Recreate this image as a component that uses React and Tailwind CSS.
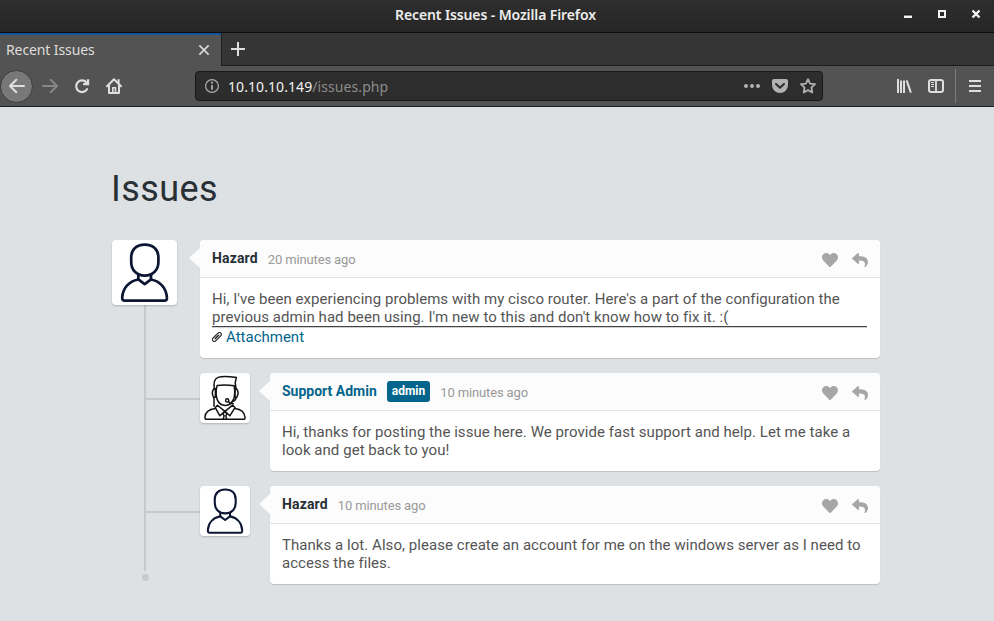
import React from "react";
import { FaHeart, FaReply } from "react-icons/fa";

const CHROME_FONT = "font-['Noto_Sans','Open_Sans',sans-serif]";

function TitleBar() {
  return (
    <div className="relative flex h-[33px] items-start border-b border-[#0b0b0b] bg-gradient-to-b from-[#2e2e2e] to-[#262626]">
      <div className="w-full pl-[395px] pt-[5px] text-[14px] leading-5 font-semibold tracking-[-0.11px] whitespace-nowrap text-[#eeeeec]">
        Recent Issues - Mozilla Firefox
      </div>
      <svg className="mt-2 mr-[13px] h-3 w-[78px] shrink-0" viewBox="0 0 78 12" fill="none">
        <path d="M1 8.5h8" stroke="#f4f4f4" strokeWidth="3" />
        <path d="M1 7h8" stroke="#111" strokeWidth="1" />
        <rect x="36" y="3" width="6" height="6" stroke="#f4f4f4" strokeWidth="2" />
        <path d="M69.5 2.5l7 7M76.5 2.5l-7 7" stroke="#f4f4f4" strokeWidth="2.4" />
      </svg>
    </div>
  );
}

function TabStrip() {
  return (
    <div className="flex h-[33px] bg-[#353535]">
      <div className="flex w-[221px] shrink-0 items-center justify-between border-t-2 border-[#15539e] bg-[#535353] pb-px pr-[11px] pl-[6px]">
        <span className="text-[14px] leading-5 tracking-[-0.1px] whitespace-nowrap text-[#dededc]">Recent Issues</span>
        <svg className="size-3" viewBox="0 0 12 12" fill="none" stroke="#dadada" strokeWidth="1.6">
          <path d="M1.4 1.4l9.2 9.2M10.6 1.4l-9.2 9.2" />
        </svg>
      </div>
      <div className="flex flex-1 items-start border-b border-l border-[#1d1d1d] pt-[9px] pl-[9px]">
        <svg className="size-[14px]" viewBox="0 0 14 14" stroke="#dedede" strokeWidth="2">
          <path d="M7 0v14M0 7h14" />
        </svg>
      </div>
    </div>
  );
}

function Toolbar() {
  return (
    <div className="flex h-[41px] items-center border-b border-[#202020] bg-[#535353] text-[#dedede]">
      <div className="flex size-[33px] shrink-0 items-center justify-center rounded-full border border-[#3c3c3c] bg-[#787878]">
        <svg className="size-4" viewBox="0 0 16 16" fill="none" stroke="currentColor" strokeWidth="2" strokeLinecap="round" strokeLinejoin="round">
          <path d="M15 8H1M7.3 1.7L1 8l6.3 6.3" />
        </svg>
      </div>
      <svg className="ml-[9px] size-4 text-[#878787]" viewBox="0 0 16 16" fill="none" stroke="currentColor" strokeWidth="2" strokeLinecap="round" strokeLinejoin="round">
        <path d="M1 8h14M8.7 1.7L15 8l-6.3 6.3" />
      </svg>
      <svg className="ml-4 size-4" viewBox="0 0 16 16" fill="none" stroke="currentColor" strokeWidth="2.2">
        <path d="M13 11.2A5.8 5.8 0 1 1 12.4 4.4" strokeLinecap="round" />
        <path d="M15.2 1.2V7.2H9.2V5h3.6V1.2z" fill="currentColor" stroke="none" />
      </svg>
      <svg className="ml-4 size-4" viewBox="0 0 16 16" fill="none" stroke="currentColor" strokeWidth="2" strokeLinejoin="round" strokeLinecap="round">
        <path d="M1 8.2L8 1.2l7 7" />
        <path d="M3 7.5V15h10V7.5" />
        <path d="M6.8 14.5V9.8h2.7v4.7" strokeWidth="1.6" />
        <path d="M12.6 2v3" />
      </svg>
      <div className="ml-[73px] flex h-[30px] w-[628px] shrink-0 items-center rounded border border-[#181818] bg-[#2d2d2d] pr-[6px] pl-[8px]">
        <svg className="size-4" viewBox="0 0 16 16" fill="none">
          <circle cx="8" cy="8" r="6.4" stroke="#adadad" strokeWidth="1.2" />
          <path d="M8 7v4.8" stroke="#adadad" strokeWidth="1.8" />
          <circle cx="8" cy="4.7" r="1.1" fill="#adadad" />
        </svg>
        <div className="ml-2 flex-1 pt-0.5 text-[14px] leading-5 tracking-[0.08px] whitespace-nowrap text-[#8c8c8a]">
          <span className="text-[#f2f2f0]">10.10.10.149</span>/issues.php
        </div>
        <svg className="h-4 w-4" viewBox="0 0 16 16" fill="#b1b1b1">
          <circle cx="2" cy="8" r="2" />
          <circle cx="8" cy="8" r="2" />
          <circle cx="14" cy="8" r="2" />
        </svg>
        <svg className="ml-3 size-4" viewBox="0 0 16 16">
          <path d="M2 1h12a2 2 0 0 1 2 2v4a8 8 0 0 1-16 0V3a2 2 0 0 1 2-2z" fill="#b1b1b1" />
          <path d="M4 6l4 3.8L12 6" fill="none" stroke="#2d2d2d" strokeWidth="2" strokeLinecap="round" strokeLinejoin="round" />
        </svg>
        <svg className="ml-3 size-4" viewBox="0 0 16 16" fill="none" stroke="#b1b1b1" strokeWidth="1.8" strokeLinejoin="round">
          <path d="M8 1.2l2.1 4.4 4.9.6-3.6 3.4.9 4.9L8 12.1l-4.3 2.4.9-4.9L1 6.2l4.9-.6z" />
        </svg>
      </div>
      <svg className="ml-[73px] size-4" viewBox="0 0 16 16" stroke="currentColor" strokeWidth="2">
        <path d="M2 1v14M5 2.5V15M8 2.5V15" />
        <path d="M10.6 2.4l4.3 12.2" />
      </svg>
      <svg className="ml-4 size-4" viewBox="0 0 16 16" fill="none" stroke="currentColor">
        <rect x="1" y="2" width="14" height="12" rx="2.2" strokeWidth="2" />
        <path d="M8 2v12" strokeWidth="1.8" />
        <path d="M3 4.5h3M3 6.5h3M3 8.5h3" strokeWidth="1" />
      </svg>
      <div className="ml-[11px] h-[34px] w-px bg-[#7c7c7c]" />
      <svg className="ml-[13px] h-3 w-3" viewBox="0 0 12 12" stroke="currentColor" strokeWidth="2">
        <path d="M0 1h12M0 6h12M0 11h12" />
      </svg>
    </div>
  );
}

function PersonIcon({ className }) {
  return (
    <svg className={className} viewBox="0 0 65 65" fill="none" stroke="#0c1633" strokeWidth="2.7" strokeLinejoin="round">
      <path d="M19.2 17.5C19.2 9.3 24.7 4.6 32.8 4.6S46.4 9.3 46.4 17.5v4.6C46.4 30 41 35.6 32.8 35.6S19.2 30 19.2 22z" />
      <path d="M26.3 34.5v5.2M39 34.5v5.2" />
      <path d="M26 39.2l6.7 5 6.7-5" />
      <path d="M26.3 39.5C17 41.3 10.7 48 10.2 57.4c-.1 2.3.6 3.3 2.6 3.3h39.6c2 0 2.7-1 2.5-3.3-.6-9.4-6.7-16.1-15.9-17.9" />
    </svg>
  );
}

function AgentIcon({ className }) {
  return (
    <svg className={className} viewBox="0 0 50 50" fill="none" stroke="#111" strokeWidth="1.5" strokeLinejoin="round" strokeLinecap="round">
      <path d="M14.6 16C13 9 14.2 6 18 4.4c5.7-1.7 12-.7 18.3.1l-1.1 5.4.8 5.8" />
      <path d="M16.2 16.6l1-4.2c5.6-.7 11.3-.6 17 .4.7 4.4.9 9.6-.7 13.6-1.6 3.8-4.9 6-8.2 6-3.5 0-6.7-2.3-8.2-6-1-2.6-1.2-6-.9-9.8z" />
      <path d="M15.4 15.8h-1.7c-1.6 2.4-1.6 6 0 8.5h1.7zM35 15.8h1.7c1.6 2.4 1.6 6 0 8.5H35z" strokeWidth="1.5" />
      <path d="M14 24.8v8.4" />
      <path d="M36.3 24.5c-.7 2.7-2.2 3.7-4 3.8" />
      <circle cx="27.2" cy="27.4" r="1.6" strokeWidth="1.5" />
      <path d="M28.6 28.6c1 1.8 2.9 2.3 4.6 2.2" />
      <path d="M17.5 32.2l7.4 6.2 7.8-6.2 2.3 2.4-5.2 8.2-4.9-4.4-5 4.4-4.6-8.2z" />
      <path d="M24.9 38.4l-2 2.4 1.2 1.8-.8 3.6M24.9 38.4l2.2 2.4-1.3 1.8.8 3.6" />
      <path d="M15.2 35.4c-6 .8-9.9 3.3-10.2 8.6-.1 1.7.2 2.3 1.6 2.3h36.8c1.4 0 1.8-.6 1.6-2.3-.5-5.3-4-7.8-10-8.6" />
    </svg>
  );
}

function Clip() {
  return (
    <svg className="mr-1 size-[10px] shrink-0" viewBox="0 0 10 10" fill="none" stroke="#222" strokeWidth="1.1" strokeLinecap="round" strokeLinejoin="round">
      <path d="M4.1 3L1 6.1a1.9 1.9 0 0 0 2.7 2.8l5-5A1.9 1.9 0 0 0 6 1.2L2.6 4.7" />
      <path d="M6.6 3.2L3.3 6.6" strokeWidth="1.5" />
    </svg>
  );
}

function CommentBox({ name, by, time, children }) {
  return (
    <article className="relative min-w-0 flex-1 rounded bg-white shadow-[0_1px_1px_rgba(0,0,0,0.15)]">
      <div className="absolute top-2 -left-[11px] h-0 w-0 border-y-[10px] border-r-[11px] border-y-transparent border-r-[#fcfcfc]" />
      <header className="flex h-[38px] items-center rounded-t border-b border-[#e5e5e5] bg-[#fcfcfc] px-3">
        <h6
          className={
            by
              ? "pb-0.5 text-[14px] leading-5 font-bold text-[#03658c]"
              : "pb-0.5 text-[14px] leading-5 font-bold tracking-[0.15px] text-[#283035]"
          }
        >
          {name}
        </h6>
        {by && (
          <span className="mb-px ml-[10px] h-[21px] rounded-[3px] bg-[#03658c] px-[5px] text-[12px] leading-[21px] font-bold text-white">admin</span>
        )}
        <span className="relative top-px ml-[10px] flex-1 text-[13px] leading-5 tracking-[-0.14px] text-[#999]">{time}</span>
        <FaHeart className="relative top-px mr-[14px] size-4 text-[#a6a6a6]" />
        <FaReply className="relative top-px size-4 text-[#a6a6a6]" />
      </header>
      <div className="p-3 text-[15px] leading-[18px] tracking-[0.05px] text-[#555]">{children}</div>
    </article>
  );
}

function Reply({ avatar, ...box }) {
  return (
    <li className="flex">
      <div className="mt-[25px] h-0.5 w-[54px] shrink-0 bg-[#c7cacb]" />
      <div className="mr-5 size-[50px] shrink-0 rounded bg-white shadow-[0_1px_2px_rgba(0,0,0,0.2)]">{avatar}</div>
      <CommentBox {...box} />
    </li>
  );
}

export default function App() {
  return (
    <div className="h-[621px] w-[994px] overflow-hidden bg-[#dee1e3]">
      <div className={CHROME_FONT}>
        <TitleBar />
        <TabStrip />
        <Toolbar />
      </div>
      <main className="w-[880px] pt-[61px] pl-28 font-['Roboto',sans-serif]">
        <h1 className="-ml-px mb-[29px] text-[36px] leading-[43px] tracking-[0.4px] text-[#283035]">Issues</h1>
        <section className="relative">
          <div className="absolute top-[65px] left-8 h-[266px] w-0.5 bg-[#c7cacb]" />
          <div className="absolute top-[334px] left-[30px] size-[7px] rounded-full bg-[#c7cacb]" />
          <div className="flex items-start">
            <div className="relative mr-[23px] size-[65px] shrink-0 rounded bg-white shadow-[0_1px_2px_rgba(0,0,0,0.2)]">
              <PersonIcon className="size-[65px]" />
            </div>
            <CommentBox name="Hazard" time="20 minutes ago">
              <p className="whitespace-nowrap">
                Hi, I've been experiencing problems with my cisco router. Here's a part of the configuration the
                <br />
                previous admin had been using. I'm new to this and don't know how to fix it. :(
              </p>
              <div className="mr-px h-0.5 border-t border-[#444] bg-[#d0d0d0]" />
              <a className="flex items-center tracking-normal text-[#03658c]">
                <Clip />
                Attachment
              </a>
            </CommentBox>
          </div>
          <ul className="mt-[15px] ml-[34px] flex flex-col gap-[15px]">
            <Reply avatar={<AgentIcon className="size-[50px]" />} name="Support Admin" by time="10 minutes ago">
              Hi, thanks for posting the issue here. We provide fast support and help. Let me take a
              <br />
              look and get back to you!
            </Reply>
            <Reply avatar={<PersonIcon className="size-[50px]" />} name="Hazard" time="10 minutes ago">
              Thanks a lot. Also, please create an account for me on the windows server as I need to
              <br />
              access the files.
            </Reply>
          </ul>
        </section>
      </main>
    </div>
  );
}
